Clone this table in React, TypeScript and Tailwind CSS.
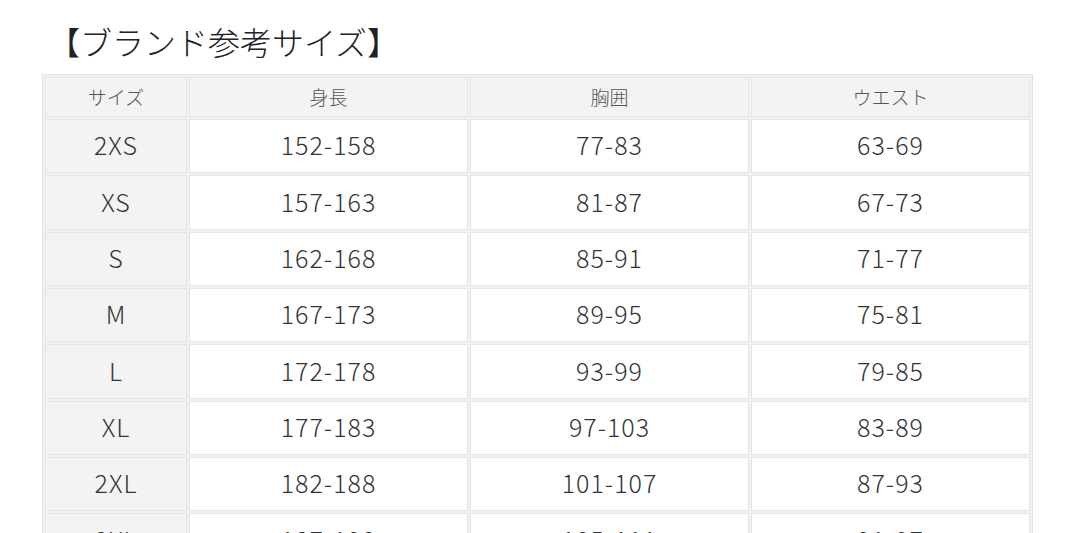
import React from 'react';

const rows: [string, string, string, string][] = [
    ['2XS', '152-158', '77-83', '63-69'],
    ['XS', '157-163', '81-87', '67-73'],
    ['S', '162-168', '85-91', '71-77'],
    ['M', '167-173', '89-95', '75-81'],
    ['L', '172-178', '93-99', '79-85'],
    ['XL', '177-183', '97-103', '83-89'],
    ['2XL', '182-188', '101-107', '87-93'],
    ['3XL', '187-193', '105-111', '91-97'],
];

const headers = ['サイズ', '身長', '胸囲', 'ウエスト'];

const App: React.FC = () => {
    return (
        <div
            className="h-[533px] overflow-hidden bg-white pl-[42px] pt-[21px] text-[#333]"
            style={{ fontFamily: '"Noto Sans CJK JP", "Noto Sans", sans-serif' }}
        >
            <h2 className="ml-[6px] text-[32px] leading-[40px] font-light text-[#222]">【ブランド参考サイズ】</h2>
            <table className="mt-[13px] w-[991px] table-fixed border-separate border-spacing-[2px] border border-[#e2e2e2] bg-[#f1f1f1]">
                <colgroup>
                    <col className="w-[142px]" />
                    <col className="w-[279px]" />
                    <col className="w-[279px]" />
                    <col className="w-[279px]" />
                </colgroup>
                <thead>
                    <tr>
                        {headers.map((h) => (
                            <th key={h} className="h-[40px] border border-[#e6e6e6] bg-[#f3f3f3] text-[19px] font-light text-[#555]">
                                {h}
                            </th>
                        ))}
                    </tr>
                </thead>
                <tbody>
                    {rows.map((r) => (
                        <tr key={r[0]}>
                            {r.map((c, i) => (
                                <td
                                    key={i}
                                    className={`h-[54.33px] border border-[#e6e6e6] pb-[2px] text-center text-[25px] font-light tracking-[1px] text-[#333] ${i === 0 ? 'bg-[#f3f3f3]' : 'bg-white'}`}
                                >
                                    {c}
                                </td>
                            ))}
                        </tr>
                    ))}
                </tbody>
            </table>
        </div>
    );
};

export default App;
